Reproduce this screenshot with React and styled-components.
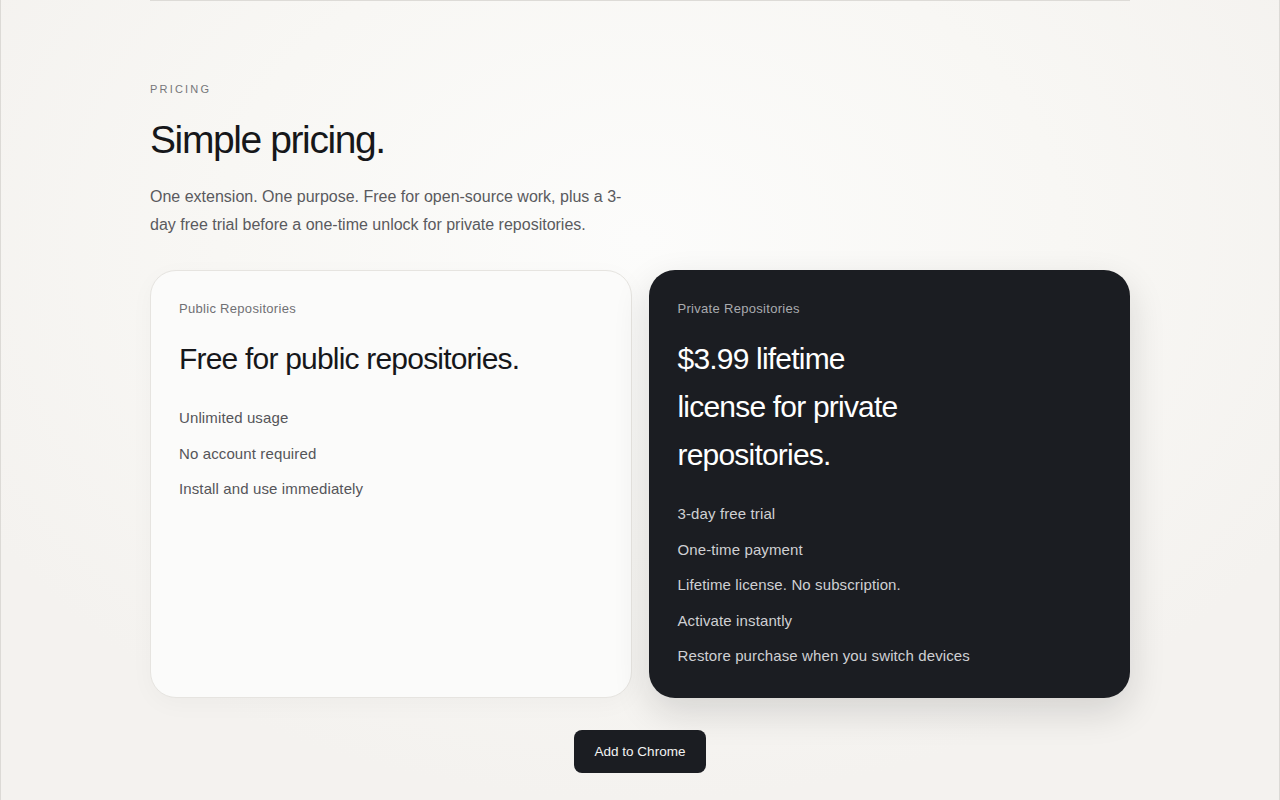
import React from "react";
import styled, { createGlobalStyle } from "styled-components";

const Global = createGlobalStyle`
  html, body { margin: 0; padding: 0; }
  body {
    background: #f5f3f0;
    font-family: "Liberation Sans", Arial, sans-serif;
    -webkit-font-smoothing: antialiased;
  }
`;

const Page = styled.div`
  min-height: 800px;
  box-sizing: border-box;
  border-left: 1px solid #dcdad6;
  border-right: 1px solid #dcdad6;
  background: radial-gradient(ellipse 60% 70% at 50% 30%, #fcfcfb 0%, #f8f7f4 55%, #f4f2ef 100%);
`;

const Section = styled.section`
  width: 980px;
  margin: 0 auto;
  border-top: 1px solid #dddbd7;
  padding: 80px 0 26px;
  display: flex;
  flex-direction: column;
`;

const Eyebrow = styled.div`
  font-size: 11px;
  letter-spacing: 2.2px;
  color: #76767a;
  text-transform: uppercase;
  line-height: 16px;
`;

const Title = styled.h2`
  margin: 19px 0 0;
  font-weight: 400;
  font-size: 39px;
  letter-spacing: -1.4px;
  line-height: 48px;
  color: #16171a;
`;

const Lead = styled.p`
  margin: 19px 0 0;
  max-width: 476px;
  font-size: 16px;
  line-height: 28px;
  color: #5a5a5e;
`;

const Cards = styled.div`
  margin-top: 31px;
  display: grid;
  grid-template-columns: 1fr 1fr;
  gap: 17px;
`;

const Card = styled.div`
  border-radius: 26px;
  padding: 29px 28px 31px;
  box-sizing: border-box;
  min-height: 428px;
  background: ${(p) => (p.$dark ? "#1b1d22" : "#fbfbfa")};
  border: ${(p) => (p.$dark ? "none" : "1px solid #e6e4e0")};
  box-shadow: ${(p) =>
    p.$dark ? "0 14px 36px rgba(20, 20, 20, 0.14)" : "0 6px 24px rgba(0,0,0,0.03)"};
  padding-left: ${(p) => (p.$dark ? "29px" : "28px")};
  padding-top: ${(p) => (p.$dark ? "30px" : "29px")};
`;

const Label = styled.div`
  font-size: 13px;
  letter-spacing: 0.3px;
  line-height: 18px;
  color: ${(p) => (p.$dark ? "#a9abaf" : "#707074")};
`;

const Plan = styled.h3`
  margin: 17px 0 0;
  font-weight: 400;
  font-size: 30px;
  letter-spacing: -0.8px;
  line-height: 48px;
  color: ${(p) => (p.$dark ? "#ffffff" : "#16171a")};
  max-width: ${(p) => (p.$dark ? "250px" : "none")};
`;

const Features = styled.ul`
  list-style: none;
  margin: 25px 0 0;
  padding: 0;
  display: flex;
  flex-direction: column;
  gap: 15.5px;
`;

const Feature = styled.li`
  font-size: 15px;
  letter-spacing: 0.12px;
  line-height: 20px;
  color: ${(p) => (p.$dark ? "#cfd0d3" : "#555559")};
`;

const ButtonRow = styled.div`
  display: flex;
  justify-content: center;
  margin-top: 32px;
`;

const Button = styled.button`
  height: 43px;
  padding: 0 21px;
  border: none;
  border-radius: 8px;
  background: #1b1d22;
  color: #f3f3f3;
  font-family: "Liberation Sans", Arial, sans-serif;
  font-size: 13.5px;
  cursor: pointer;
`;

const publicFeatures = ["Unlimited usage", "No account required", "Install and use immediately"];
const privateFeatures = [
  "3-day free trial",
  "One-time payment",
  "Lifetime license. No subscription.",
  "Activate instantly",
  "Restore purchase when you switch devices",
];

export default function App() {
  return (
    <>
      <Global />
      <Page>
        <Section>
          <Eyebrow>Pricing</Eyebrow>
          <Title>Simple pricing.</Title>
          <Lead>
            One extension. One purpose. Free for open-source work, plus a 3-day free trial before a
            one-time unlock for private repositories.
          </Lead>
          <Cards>
            <Card>
              <Label>Public Repositories</Label>
              <Plan>Free for public repositories.</Plan>
              <Features>
                {publicFeatures.map((f) => (
                  <Feature key={f}>{f}</Feature>
                ))}
              </Features>
            </Card>
            <Card $dark>
              <Label $dark>Private Repositories</Label>
              <Plan $dark>$3.99 lifetime license for private repositories.</Plan>
              <Features>
                {privateFeatures.map((f) => (
                  <Feature key={f} $dark>
                    {f}
                  </Feature>
                ))}
              </Features>
            </Card>
          </Cards>
          <ButtonRow>
            <Button>Add to Chrome</Button>
          </ButtonRow>
        </Section>
      </Page>
    </>
  );
}
